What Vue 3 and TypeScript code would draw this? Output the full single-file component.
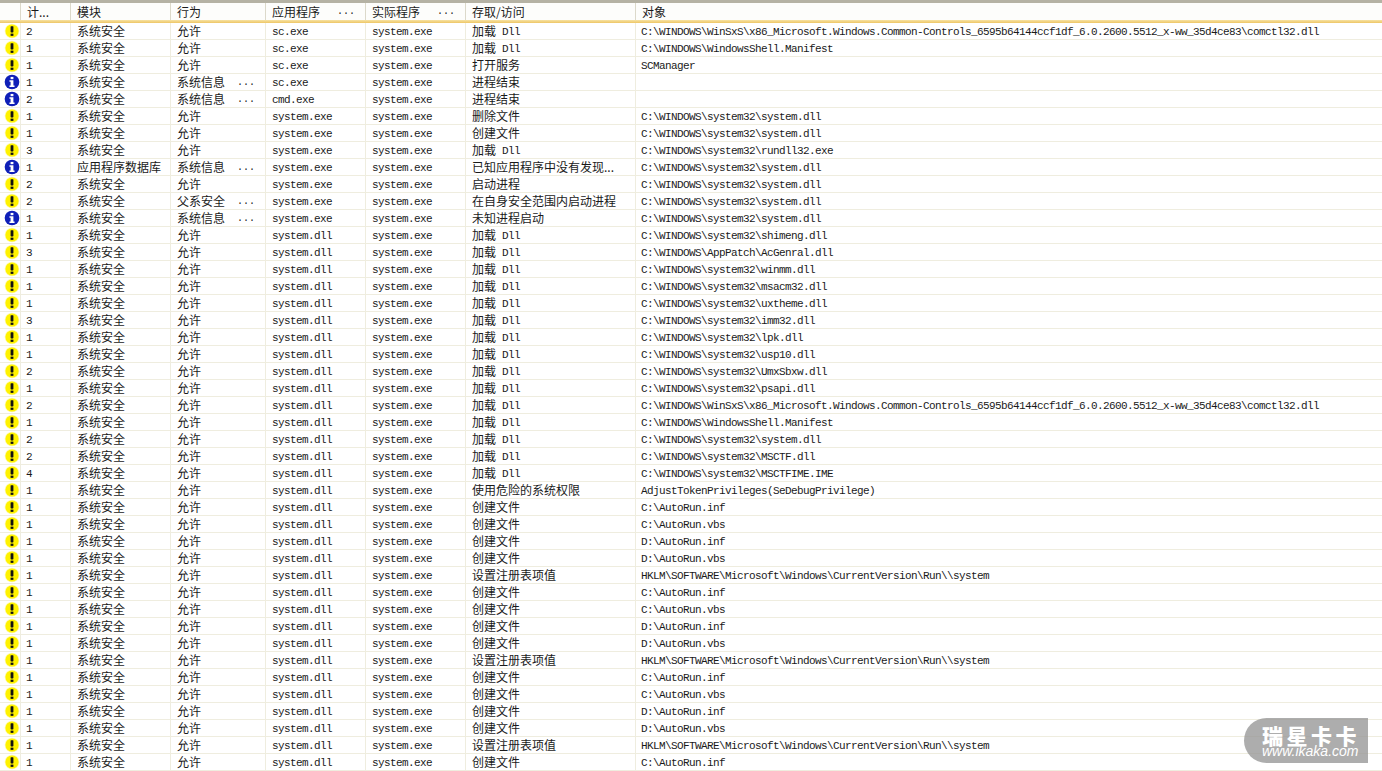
<script setup lang="ts">
interface Row {
  kind: 'w' | 'i'
  count: number
  mod: string
  act: string
  dots: boolean
  app: string
  access: string
  target: string
}

const sys = 'C:\\WINDOWS\\system32\\'
const sxs = 'C:\\WINDOWS\\WinSxS\\x86_Microsoft.Windows.Common-Controls_6595b64144ccf1df_6.0.2600.5512_x-ww_35d4ce83\\comctl32.dll'
const shell = 'C:\\WINDOWS\\WindowsShell.Manifest'
const reg = 'HKLM\\SOFTWARE\\Microsoft\\Windows\\CurrentVersion\\Run\\\\system'
const M = '系统安全'
const load = '加载 Dll'
const make = '创建文件'

function r(count: number, app: string, access: string, target: string, kind: 'w' | 'i' = 'w', act = '允许', mod = M): Row {
  return { kind, count, mod, act, dots: act !== '允许', app, access, target }
}
const dll = 'system.dll'
const exe = 'system.exe'

const autorun = (): Row[] => [
  r(1, dll, make, 'C:\\AutoRun.inf'),
  r(1, dll, make, 'C:\\AutoRun.vbs'),
  r(1, dll, make, 'D:\\AutoRun.inf'),
  r(1, dll, make, 'D:\\AutoRun.vbs'),
]
const regRow = () => r(1, dll, '设置注册表项值', reg)

const rows: Row[] = [
  r(2, 'sc.exe', load, sxs),
  r(1, 'sc.exe', load, shell),
  r(1, 'sc.exe', '打开服务', 'SCManager'),
  r(1, 'sc.exe', '进程结束', '', 'i', '系统信息'),
  r(2, 'cmd.exe', '进程结束', '', 'i', '系统信息'),
  r(1, exe, '删除文件', sys + 'system.dll'),
  r(1, exe, make, sys + 'system.dll'),
  r(3, exe, load, sys + 'rundll32.exe'),
  r(1, exe, '已知应用程序中没有发现...', sys + 'system.dll', 'i', '系统信息', '应用程序数据库'),
  r(2, exe, '启动进程', sys + 'system.dll'),
  r(2, exe, '在自身安全范围内启动进程', sys + 'system.dll', 'w', '父系安全'),
  r(1, exe, '未知进程启动', sys + 'system.dll', 'i', '系统信息'),
  r(1, dll, load, sys + 'shimeng.dll'),
  r(3, dll, load, 'C:\\WINDOWS\\AppPatch\\AcGenral.dll'),
  r(1, dll, load, sys + 'winmm.dll'),
  r(1, dll, load, sys + 'msacm32.dll'),
  r(1, dll, load, sys + 'uxtheme.dll'),
  r(3, dll, load, sys + 'imm32.dll'),
  r(1, dll, load, sys + 'lpk.dll'),
  r(1, dll, load, sys + 'usp10.dll'),
  r(2, dll, load, sys + 'UmxSbxw.dll'),
  r(1, dll, load, sys + 'psapi.dll'),
  r(2, dll, load, sxs),
  r(1, dll, load, shell),
  r(2, dll, load, sys + 'system.dll'),
  r(2, dll, load, sys + 'MSCTF.dll'),
  r(4, dll, load, sys + 'MSCTFIME.IME'),
  r(1, dll, '使用危险的系统权限', 'AdjustTokenPrivileges(SeDebugPrivilege)'),
  ...autorun(),
  regRow(),
  ...autorun(),
  regRow(),
  ...autorun(),
  regRow(),
  r(1, dll, make, 'C:\\AutoRun.inf'),
]

const headers = [
  { t: '', d: false },
  { t: '计...', d: false },
  { t: '模块', d: false },
  { t: '行为', d: false },
  { t: '应用程序', d: true },
  { t: '实际程序', d: true },
  { t: '存取/访问', d: false },
  { t: '对象', d: false },
]
</script>

<template>
  <div class="page">
    <div class="topline"></div>
    <div class="row head">
      <div v-for="(h, i) in headers" :key="i" class="cell">
        <span class="cjk">{{ h.t }}</span>
        <span v-if="h.d" class="dots">...</span>
      </div>
    </div>
    <div class="accent"></div>
    <div v-for="(x, i) in rows" :key="i" class="row item">
      <div class="cell ico">
        <svg v-if="x.kind === 'w'" width="17" height="16" viewBox="0 0 17 16">
          <circle cx="8.5" cy="8" r="7.8" fill="#fffbb0" />
          <circle cx="8.5" cy="8" r="7" fill="#fff200" />
          <rect x="7" y="3" width="3" height="6.5" rx="0.6" fill="#111" />
          <rect x="7" y="10.8" width="3" height="2.4" fill="#111" />
        </svg>
        <svg v-else width="17" height="16" viewBox="0 0 17 16">
          <circle cx="8.5" cy="8" r="7.8" fill="#0f1fb8" />
          <rect x="7" y="2.6" width="3" height="2.4" fill="#fff" />
          <path d="M5.8 6.2h4.2v5.6h1.2v1.6H5.8v-1.6h1.2V7.8H5.8z" fill="#fff" />
        </svg>
      </div>
      <div class="cell mono num">{{ x.count }}</div>
      <div class="cell"><span class="cjk">{{ x.mod }}</span></div>
      <div class="cell">
        <span class="cjk">{{ x.act }}</span>
        <span v-if="x.dots" class="dots">...</span>
      </div>
      <div class="cell mono">{{ x.app }}</div>
      <div class="cell mono">system.exe</div>
      <div class="cell">
        <template v-if="x.access === '加载 Dll'">
          <span class="cjk">加载</span><span class="mono dll">Dll</span>
        </template>
        <span v-else class="cjk">{{ x.access }}</span>
      </div>
      <div class="cell mono last">{{ x.target }}</div>
    </div>
    <div class="mark">
      <div class="mark-cn">瑞星卡卡</div>
      <div class="mark-en">www.ikaka.com</div>
    </div>
  </div>
</template>

<style scoped>
.page {
  position: relative;
  width: 1382px;
  height: 771px;
  overflow: hidden;
  background: #fff;
  color: #1a1a1a;
}
.topline {
  height: 3px;
  background: #b5b2a4;
}
.row {
  display: grid;
  grid-template-columns: 21px 50px 100px 95px 100px 100px 170px 1fr;
}
.head {
  height: 17px;
  background: #fdfdfb;
}
.accent {
  height: 3px;
  background: linear-gradient(#f6e2a4, #eec665);
}
.item {
  height: 17px;
  box-sizing: border-box;
  border-bottom: 1px solid #efeddf;
}
.cell {
  display: flex;
  align-items: center;
  padding-left: 6px;
  border-right: 1px solid #efeddf;
  white-space: nowrap;
  overflow: hidden;
  min-width: 0;
}
.cell:last-child {
  border-right: 0;
  overflow: visible;
}
.head .cell {
  border-right-color: #dcd9ca;
}
.ico {
  padding-left: 4px;
  overflow: visible;
}
.cell.mono {
  padding-top: 2px;
}
.num {
  padding-left: 5px;
}
.last {
  padding-left: 5px;
}
.cjk {
  font-family: "Noto Sans CJK SC", "Noto Sans", sans-serif;
  font-size: 12px;
  line-height: 16px;
}
.mono {
  font-family: "Liberation Mono", monospace;
  font-size: 11px;
  letter-spacing: -0.6px;
}
.dll {
  margin-left: 6px;
  padding-top: 2px;
}
.dots {
  font-family: "Liberation Mono", monospace;
  font-size: 10px;
  margin-left: auto;
  margin-right: 10px;
}
.mark {
  position: absolute;
  left: 1244px;
  top: 718px;
  width: 124px;
  height: 45px;
  box-sizing: border-box;
  padding: 7px 0 0 18px;
  border-radius: 23px 0 0 23px;
  background: rgba(150, 150, 150, 0.78);
  color: #fff;
  font-family: "Liberation Sans", sans-serif;
}
.mark-cn {
  font-family: "Noto Sans CJK SC", sans-serif;
  font-size: 21px;
  font-weight: 900;
  line-height: 20px;
  letter-spacing: 3.5px;
  white-space: nowrap;
}
.mark-en {
  font-size: 14px;
  font-style: italic;
  line-height: 13px;
  white-space: nowrap;
}
</style>
